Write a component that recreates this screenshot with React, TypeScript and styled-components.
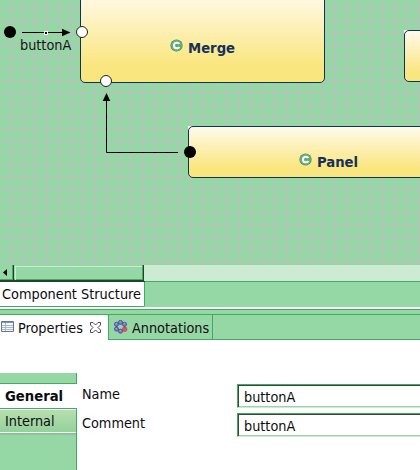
import React from 'react';
import styled, { createGlobalStyle } from 'styled-components';

const GREEN = '#96d7a6';
const EDGE = '#42ab60';

const GlobalStyle = createGlobalStyle`
  * { box-sizing: border-box; }
  body {
    margin: 0;
    overflow: hidden;
    background: #fff;
    color: #0c0c10;
    font: 14.3px/18px "DejaVu Sans Condensed", "DejaVu Sans", sans-serif;
    letter-spacing: 0;
  }
  svg { display: block; flex: none; }
`;

const Window = styled.div`
  display: flex;
  flex-direction: column;
  width: 420px;
  height: 470px;
  overflow: hidden;
  background: #fff;
  white-space: nowrap;
`;

const Canvas = styled.div`
  position: relative;
  flex: none;
  height: 265px;
  overflow: hidden;
  background-color: ${GREEN};
  background-image:
    linear-gradient(90deg, #c2b9c2 1px, transparent 1px),
    linear-gradient(#c2b9c2 1px, transparent 1px);
  background-size: 12px 12px;
  background-position: 10px 8px;
`;

const Corner = styled.i<{ $x: number; $y: number }>`
  position: absolute;
  left: ${p => p.$x}px;
  top: ${p => p.$y}px;
  width: 4px;
  height: 4px;
  background: linear-gradient(135deg, #f4f4ee 55%, transparent 56%);
`;

const Node = styled.div<{ $x: number; $y: number; $w: number; $h: number; $pad?: string }>`
  position: absolute;
  left: ${p => p.$x}px;
  top: ${p => p.$y}px;
  width: ${p => p.$w}px;
  height: ${p => p.$h}px;
  padding: ${p => p.$pad ?? '0'};
  display: flex;
  align-items: flex-start;
  gap: 5px;
  border: 1px solid #12305a;
  border-radius: 5px;
  background: linear-gradient(#fffaea, #fae67e 82%, #fae67e);
`;

const NodeName = styled.span`
  color: #15305a;
  font-size: 14.7px;
  font-weight: 700;
`;

const Wires = styled.svg`
  position: absolute;
  inset: 0;
`;

const EdgeLabel = styled.span`
  position: absolute;
  left: 20px;
  top: 36px;
  color: #101713;
`;

const ScrollBar = styled.div`
  flex: none;
  display: flex;
  height: 17px;
  background: #cdead3;
  border-bottom: 1px solid ${EDGE};
`;

const ScrollButton = styled.div`
  width: 14px;
  height: 16px;
  padding: 4px 0 0 3px;
  background: ${GREEN};
  border-right: 1px solid #24432d;
  border-bottom: 1px solid #24432d;
  box-shadow: inset -1px -1px ${EDGE};
`;

const ScrollThumb = styled.div`
  width: 130px;
  height: 16px;
  padding: 1px;
  background: ${GREEN};
  border-right: 1px solid #24432d;
  border-bottom: 1px solid #24432d;
  box-shadow: inset -1px -1px ${EDGE};

  &::before {
    content: '';
    display: block;
    height: 100%;
    border-top: 1px solid #cdead3;
    border-left: 1px solid #cdead3;
  }
`;

const PageTabs = styled.div`
  flex: none;
  display: flex;
  height: 25px;
  background: ${GREEN};
`;

const PageTab = styled.div`
  width: 145px;
  height: 25px;
  padding: 3px 0 0 2px;
  background: #fff;
  border-right: 1px solid ${EDGE};
  border-bottom: 1px solid ${EDGE};
  border-bottom-right-radius: 2px;
  box-shadow: 0 -1px #24432d;
  font-size: 14.35px;
`;

const Splitter = styled.div`
  flex: none;
  height: 8px;
  background: ${GREEN};
  border-top: 2px solid #fff;
  border-bottom: 1px solid ${EDGE};
  box-shadow: inset 0 1px ${EDGE};
`;

const ViewTabs = styled.div`
  flex: none;
  display: flex;
  height: 25px;
  background: ${GREEN};
`;

const ActiveTab = styled.div`
  display: flex;
  width: 108px;
  height: 25px;
  padding: 4px 0 0 1px;
  background: #fff;
  border-top-right-radius: 2px;
`;

const TabIcon = styled.svg<{ $top: number }>`
  margin-top: ${p => p.$top}px;
`;

const TabText = styled.span`
  margin-left: 4px;
`;

const CloseIcon = styled.svg`
  margin: 3px 0 0 7px;
`;

const IdleTab = styled.div`
  display: flex;
  width: 105px;
  height: 25px;
  padding: 4px 0 0 5px;
  border: solid ${EDGE};
  border-width: 0 1px 1px;
`;

const TabFiller = styled.div`
  flex: 1;
  border-bottom: 1px solid ${EDGE};
`;

const Properties = styled.div`
  flex: 1;
  display: flex;
  padding-top: 33px;
`;

const Side = styled.nav`
  display: flex;
  flex-direction: column;
  width: 77px;
`;

const SideFill = styled.div<{ $h?: number }>`
  ${p => (p.$h ? `height: ${p.$h}px; border-bottom: 1px solid ${EDGE};` : `flex: 1;`)}
  background: ${p => (p.$h ? GREEN : `linear-gradient(#7fbd8e, ${GREEN} 3px)`)};
  border-right: 1px solid ${EDGE};
`;

const SideItem = styled.div<{ $active?: boolean }>`
  padding-left: 5px;
  ${p =>
    p.$active
      ? `height: 24px; padding-top: 3px; background: #fff; font-weight: 700; font-size: 14.7px;`
      : `height: 25px; padding-top: 3px; border: solid ${EDGE}; border-width: 1px 1px 0 0;
         background: linear-gradient(#b9dfb0, #94d09c);
         box-shadow: inset 0 1px #fff, inset 0 -1px #fff;`}
`;

const Form = styled.div`
  flex: 1;
  display: grid;
  grid-template-columns: 155px 1fr;
  grid-auto-rows: 24px;
  row-gap: 5px;
  padding: 11px 0 0 5px;
`;

const Label = styled.label`
  padding-top: 1px;
`;

const Field = styled.div`
  height: 24px;
  padding: 3px 0 0 6px;
  background: #fff;
  border: solid;
  border-width: 1px 0 1px 1px;
  border-color: ${EDGE} ${EDGE} #cdead3;
  box-shadow: inset 1px 1px #314b39, inset 0 -1px ${GREEN};
`;

function ClassIcon() {
  return (
    <svg width="13" height="13" viewBox="0 0 13 13">
      <circle cx="6.5" cy="6.5" r="6.1" fill="#3f8f58" />
      <circle cx="6.5" cy="6.5" r="4.9" fill="#5fa873" stroke="#82bd8e" strokeWidth=".8" />
      <path d="M9.2 5C8.4 3.2 4 2.9 4 6.5s4.400 3.300 5.200 1.500" fill="none" stroke="#fff" strokeWidth="2.1" />
    </svg>
  );
}

function TableIcon() {
  return (
    <TabIcon $top={2} width="13" height="11" viewBox="0 0 13 11">
      <path d="M.5.5h12v10H.5z" fill="#f4f9fd" stroke="#66758c" />
      <path d="M1 1h11v1H1z" fill="#8295b5" />
      <path d="M1 4.500h11M1 6.500h11M1 8.500h11M4.500 2v8" stroke="#aab9ca" />
    </TabIcon>
  );
}

const PETALS = [[6.5, 2.4], [10.5, 4.3], [2.5, 4.3], [2.5, 9.1], [6.5, 11.2]];

function AnnotationIcon() {
  return (
    <TabIcon $top={1} width="14" height="14" viewBox="0 0 14 14">
      <circle cx="6.5" cy="6.8" r="4" fill="none" stroke="#5659a0" strokeWidth="1.5" />
      {PETALS.map(([x, y]) => (
        <g key={`${x}-${y}`}>
          <circle cx={x} cy={y} r="2.1" fill="#7679ba" stroke="#4a4c9b" strokeWidth=".8" />
          <circle cx={x - 0.3} cy={y - 0.5} r=".7" fill="#adb0df" />
        </g>
      ))}
      <circle cx="10.7" cy="9.2" r="2.3" fill="#d95365" stroke="#b93b54" strokeWidth=".6" />
    </TabIcon>
  );
}

export default function App() {
  return (
    <Window>
      <GlobalStyle />
      <Canvas>
        <Corner $x={404} $y={30} />
        <Corner $x={188} $y={126} />
        <Node $x={80} $y={-8} $w={245} $h={91} $pad="46px 0 0 89px">
          <ClassIcon />
          <NodeName>Merge</NodeName>
        </Node>
        <Node $x={404} $y={30} $w={120} $h={52} />
        <Node $x={188} $y={126} $w={260} $h={52} $pad="26px 0 0 110px">
          <ClassIcon />
          <NodeName>Panel</NodeName>
        </Node>
        <Wires width="420" height="265">
          <path d="M22 32.5H64M106.500 100V152.500H178" fill="none" stroke="#000" />
          <path d="M62 28.700L70.500 32.500L62 36.300zM102.700 101L106.500 93L110.300 101z" />
          <path d="M44 31h4v4h-4z" fill="#fff" />
          <path d="M45 32h2v2h-2z" />
          <circle cx="10" cy="32" r="6" />
          <circle cx="190" cy="152" r="6" />
          <circle cx="82" cy="32" r="5.5" fill="#fff" stroke="#222" />
          <circle cx="106" cy="81" r="5.5" fill="#fff" stroke="#222" />
        </Wires>
        <EdgeLabel>buttonA</EdgeLabel>
      </Canvas>
      <ScrollBar>
        <ScrollButton>
          <svg width="4" height="7" viewBox="0 0 4 7"><path d="M4 0v7L0 3.500z" /></svg>
        </ScrollButton>
        <ScrollThumb />
      </ScrollBar>
      <PageTabs>
        <PageTab>Component Structure</PageTab>
      </PageTabs>
      <Splitter />
      <ViewTabs>
        <ActiveTab>
          <TableIcon />
          <TabText>Properties</TabText>
          <CloseIcon width="11" height="11" viewBox="0 0 11 11">
            <path
              d="M.5.5h2.500l2.500 2.500L8 .5h2.500V3L8 5.500 10.500 8v2.500H8L5.500 8 3 10.500H.5V8L3 5.500.5 3z"
              fill="#fff"
              stroke="#4b4b4b"
            />
          </CloseIcon>
        </ActiveTab>
        <IdleTab>
          <AnnotationIcon />
          <TabText>Annotations</TabText>
        </IdleTab>
        <TabFiller />
      </ViewTabs>
      <Properties>
        <Side>
          <SideFill $h={11} />
          <SideItem $active>General</SideItem>
          <SideItem>Internal</SideItem>
          <SideFill />
        </Side>
        <Form>
          <Label>Name</Label>
          <Field>buttonA</Field>
          <Label>Comment</Label>
          <Field>buttonA</Field>
        </Form>
      </Properties>
    </Window>
  );
}
